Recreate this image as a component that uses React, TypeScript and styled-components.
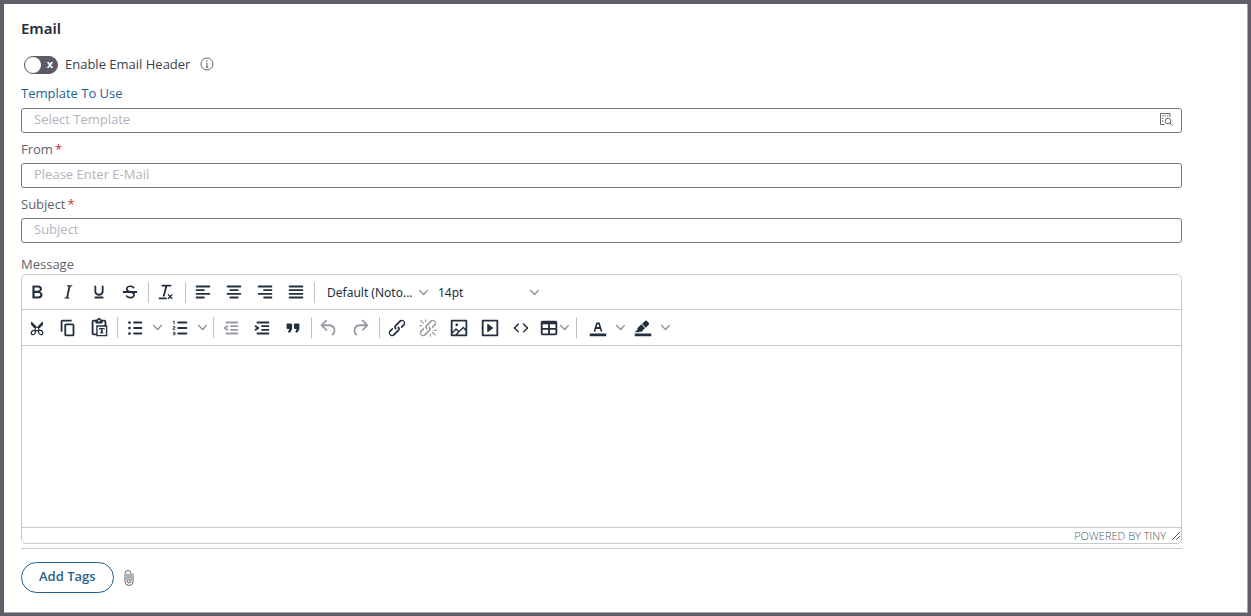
import React from "react";
import styled, { createGlobalStyle, css } from "styled-components";

const ink = "#222f3e";
const sans = `"Open Sans", "Noto Sans", sans-serif`;
const noto = `"Noto Sans", "Open Sans", sans-serif`;

const GlobalStyle = createGlobalStyle`
  *, *::before, *::after { box-sizing: border-box; }
  body { margin: 0; background: #625d68; font-family: ${sans}; font-size: 13px; color: #33373f; }
  button, input, select, textarea { font: inherit; color: inherit; }
`;

const Frame = styled.div`
  min-height: 100vh;
  display: flex;
  padding: 4px 3px 3px 4px;
`;

const Panel = styled.main`
  flex: 1;
  background: #fff;
  border: solid #a9a6ae;
  border-width: 0 1px 1px 0;
  padding: 15px 65px 19px 17px;
`;

const Title = styled.h1`
  margin: 0;
  font-family: ${noto};
  font-size: 15px;
  line-height: 18px;
  font-weight: 600;
  color: #262b36;
`;

const ToggleRow = styled.div`
  display: flex;
  align-items: center;
  height: 18px;
  margin-top: 19px;
  padding-left: 3px;
`;

const ToggleLabel = styled.label`
  display: flex;
  align-items: center;
  gap: 7px;
  line-height: 18px;
  color: #3c414b;
`;

const ToggleText = styled.span`
  padding-bottom: 2px;
`;

const Switch = styled.input`
  appearance: none;
  margin: 0;
  width: 34px;
  height: 18px;
  border: 1px solid #5f5a66;
  border-radius: 9px;
  background: #5f5a66;
  display: flex;
  align-items: center;
  justify-content: space-between;
  padding-right: 4px;
  &::before {
    content: "";
    width: 16px;
    height: 16px;
    border-radius: 50%;
    background: #fff;
  }
  &::after {
    content: "x";
    color: #fff;
    font: 700 11px/14px ${noto};
    padding-bottom: 2px;
  }
`;

const IconButton = styled.button`
  border: 0;
  background: none;
  padding: 0;
  display: flex;
  color: #62666d;
`;

const InfoButton = styled(IconButton)`
  margin-left: 10px;
  padding-bottom: 2px;
`;

const Label = styled.label<{ $link?: boolean }>`
  display: block;
  height: 30px;
  padding: 7px 0 0;
  line-height: 18px;
  color: #5e626b;
  ${(p) =>
    p.$link &&
    css`
      height: 34px;
      padding-top: 10px;
      font-weight: 500;
      color: #1f5f93;
    `}
`;

const MessageLabel = styled(Label)`
  height: 31px;
  padding-top: 12px;
`;

const Required = styled.span`
  margin-left: 2px;
  color: #c9302c;
`;

const Field = styled.div`
  display: flex;
  align-items: center;
  height: 25px;
  padding: 0 8px 3px 12px;
  border: 1px solid #77757d;
  border-radius: 3px;
`;

const TextInput = styled.input`
  flex: 1;
  min-width: 0;
  height: 20px;
  padding: 0;
  border: 0;
  outline: 0;
  background: none;
  &::placeholder { color: #b1b4bb; opacity: 1; }
`;

const Editor = styled.section`
  border: 1px solid #c8c9cb;
  border-radius: 5px;
  overflow: hidden;
`;

const Toolbar = styled.div`
  display: flex;
  align-items: center;
  height: 35px;
  border-bottom: 1px solid #c8c9cb;
  & + & { height: 36px; }
`;

const Group = styled.div<{ $tight?: boolean; $lead?: number }>`
  display: flex;
  align-items: center;
  height: 21px;
  padding: 0 ${(p) => (p.$tight ? 2 : 3)}px 0 ${(p) => p.$lead ?? 2}px;
  & + & { border-left: 1px solid #c0c2c6; }
  &:first-child { padding-left: 0; }
`;

const ToolButton = styled.button<{ $wide?: boolean }>`
  display: flex;
  align-items: center;
  width: ${(p) => (p.$wide ? 32 : 31)}px;
  height: 28px;
  padding: 0 4px;
  border: 0;
  background: none;
  color: ${ink};
  &:disabled { color: #999ca3; }
`;

const MenuToolButton = styled(ToolButton)`
  width: 36px;
  padding: 0 1px;
`;

const ArrowButton = styled(ToolButton)`
  width: 13px;
  padding: 0 1px;
`;

const SelectBox = styled.div`
  display: flex;
  align-items: center;
  width: 101px;
  & + & { margin-left: 10px; }
`;

const Select = styled.select`
  appearance: none;
  flex: 1;
  min-width: 0;
  padding: 2px 0 0;
  border: 0;
  background: none;
  font-family: ${noto};
  font-size: 12px;
  line-height: 18px;
  color: ${ink};
`;

const Body = styled.textarea`
  display: block;
  width: 100%;
  height: 181px;
  padding: 12px;
  border: 0;
  outline: 0;
  resize: none;
  font-size: 14px;
`;

const StatusBar = styled.footer`
  display: flex;
  align-items: center;
  justify-content: flex-end;
  gap: 5px;
  height: 16px;
  border-top: 1px solid #c8c9cb;
`;

const Powered = styled.a`
  font-size: 11px;
  line-height: 15px;
  font-weight: 300;
  color: #4f5661;
  text-decoration: none;
`;

const Actions = styled.div`
  display: flex;
  align-items: center;
  gap: 10px;
  margin-top: 4px;
  padding-top: 13px;
  border-top: 1px solid #c8c9cb;
`;

const PillButton = styled.button`
  height: 31px;
  padding: 0 17px 3px;
  border: 1px solid #1f5f93;
  border-radius: 16px;
  background: #fff;
  font-weight: 600;
  color: #2b5f8c;
`;

const paths: Record<string, string> = {
  bold: "M7.8 19c-.3 0-.5 0-.6-.2l-.2-.5V5.7c0-.2 0-.4.2-.5l.6-.2h5c1.5 0 2.7.3 3.5 1 .7.6 1.1 1.4 1.1 2.5a3 3 0 01-.6 1.9c-.4.6-1 1-1.6 1.2.4.1.9.3 1.3.6s.8.7 1 1.2c.4.4.5 1 .5 1.6 0 1.3-.4 2.3-1.3 3-.8.7-2.1 1-3.8 1H7.8zm5-8.3c.6 0 1.2-.1 1.6-.5.4-.3.6-.7.6-1.3 0-1.1-.8-1.7-2.3-1.7H9.3v3.5h3.4zm.5 6c.7 0 1.3-.1 1.7-.4.4-.4.6-.9.6-1.5s-.2-1-.7-1.4c-.4-.3-1-.4-2-.4H9.4v3.8h4z",
  italic: "M16.7 4.7l-.1.9h-.3c-.6 0-1 0-1.4.3-.3.3-.4.6-.5 1.1l-2.1 9.8v.6c0 .5.4.8 1.4.8h.2l-.2.8H8l.2-.8h.2c1.1 0 1.8-.5 2-1.5l2-9.8.1-.5c0-.6-.4-.8-1.4-.8h-.3l.2-.9h5.8z",
  underline: "M16 5c.6 0 1 .4 1 1v5.5a4 4 0 01-.4 1.8l-1 1.4a5.3 5.3 0 01-5.5 1 5 5 0 01-1.6-1c-.5-.4-.8-.9-1.1-1.4a4 4 0 01-.4-1.8V6c0-.6.4-1 1-1s1 .4 1 1v5.5c0 .3 0 .6.2 1l.6.7a3.3 3.3 0 002.2.8 3.4 3.4 0 002.2-.8c.3-.2.4-.5.6-.8l.2-.9V6c0-.6.4-1 1-1zM8 17h8c.6 0 1 .4 1 1s-.4 1-1 1H8a1 1 0 010-2z",
  strike: "M15.6 8.5c-.5-.7-1-1.1-1.3-1.3-.6-.4-1.3-.6-2-.6-2.7 0-2.8 1.7-2.8 2.1 0 1.6 1.8 2 3.2 2.3 4.4.9 4.6 2.8 4.6 3.9 0 1.4-.7 4.1-5 4.1A6.2 6.2 0 017 16.4l1.5-1.1c.4.6 1.6 2 3.7 2 1.6 0 2.5-.4 3-1.2.4-.8.3-2-.8-2.6-.7-.4-1.6-.7-2.9-1-1-.2-3.9-.8-3.9-3.6C7.6 6 10.3 5 12.4 5c2.9 0 4.2 1.6 4.7 2.4l-1.5 1.1zM5 11h14a1 1 0 010 2H5a1 1 0 010-2z",
  clear: "M13.2 6a1 1 0 010 .2l-2.6 10a1 1 0 01-1 .8h-.2a.8.8 0 01-.8-1l2.6-10H8a1 1 0 110-2h9a1 1 0 010 2h-3.8zM5 18h7a1 1 0 010 2H5a1 1 0 010-2zm13 1.5L16.5 18 15 19.5a.7.7 0 01-1-1l1.5-1.5-1.5-1.5a.7.7 0 011-1l1.5 1.5 1.5-1.5a.7.7 0 011 1L17.5 17l1.5 1.5a.7.7 0 01-1 1z",
  left: "M5 5h14a1 1 0 010 2H5a1 1 0 010-2zm0 4h8a1 1 0 010 2H5a1 1 0 010-2zm0 8h8a1 1 0 010 2H5a1 1 0 010-2zm0-4h14a1 1 0 010 2H5a1 1 0 010-2z",
  center: "M5 5h14a1 1 0 010 2H5a1 1 0 010-2zm3 4h8a1 1 0 010 2H8a1 1 0 010-2zm0 8h8a1 1 0 010 2H8a1 1 0 010-2zm-3-4h14a1 1 0 010 2H5a1 1 0 010-2z",
  right: "M5 5h14a1 1 0 010 2H5a1 1 0 010-2zm6 4h8a1 1 0 010 2h-8a1 1 0 010-2zm0 8h8a1 1 0 010 2h-8a1 1 0 010-2zm-6-4h14a1 1 0 010 2H5a1 1 0 010-2z",
  justify: "M5 5h14a1 1 0 010 2H5a1 1 0 010-2zm0 4h14a1 1 0 010 2H5a1 1 0 010-2zm0 4h14a1 1 0 010 2H5a1 1 0 010-2zm0 4h14a1 1 0 010 2H5a1 1 0 010-2z",
  cut: "M18 15c.6.7 1 1.4 1 2.3 0 .8-.2 1.5-.7 2l-.8.5-1 .2c-.4 0-.8 0-1.2-.3a3.9 3.9 0 01-2.1-2.2c-.2-.5-.3-1-.2-1.5l-1-1-1 1c0 .5 0 1-.2 1.5-.1.5-.4 1-.9 1.4-.3.4-.7.6-1.2.8l-1.2.3c-.4 0-.7 0-1-.2-.3 0-.6-.3-.8-.5-.5-.5-.8-1.2-.7-2 0-.9.4-1.6 1-2.2A3.7 3.7 0 018.6 14H9l1-1-4-4-.5-1a3.3 3.3 0 010-2c0-.4.3-.7.5-1l6 6 6-6 .5 1a3.3 3.3 0 010 2c0 .4-.3.7-.5 1l-4 4 1 1h.5c.4 0 .8 0 1.2.3.5.2.9.4 1.2.8zm-8.5 2.2l.1-.4v-.3-.4a1 1 0 00-.2-.5 1 1 0 00-.4-.2 1.6 1.6 0 00-.8 0 2.6 2.6 0 00-.8.3 2.5 2.5 0 00-.9 1.1l-.1.4v.7l.2.5.5.2h.7a2.5 2.5 0 00.8-.3 2.8 2.8 0 001-1zm2.5-2.8c.4 0 .7-.1 1-.4.3-.3.4-.6.4-1s-.1-.7-.4-1c-.3-.3-.6-.4-1-.4s-.7.1-1 .4c-.3.3-.4.6-.4 1s.1.7.4 1c.3.3.6.4 1 .4zm5.400 4l.2-.5v-.4-.3a2.600 2.600 0 00-.3-.8 2.400 2.400 0 00-.7-.7 2.500 2.500 0 00-.8-.3 1.500 1.500 0 00-.8 0 1 1 0 00-.4.2 1 1 0 00-.2.5 1.500 1.500 0 000 .7v.4l.3.4.3.4a2.800 2.800 0 00.8.5l.4.1h.7l.5-.2z",
  copy: "M16 3H6a2 2 0 00-2 2v11h2V5h10V3zm1 4a2 2 0 012 2v10a2 2 0 01-2 2h-7a2 2 0 01-2-2V9c0-1.2.9-2 2-2h7zm0 12V9h-7v10h7z",
  paste: "M18 9V5h-2v1c0 .6-.4 1-1 1H9a1 1 0 01-1-1V5H6v13h3V9h9zM9 20H6a2 2 0 01-2-2V5c0-1.1.9-2 2-2h3.2A3 3 0 0112 1a3 3 0 012.8 2H18a2 2 0 012 2v4h1v12H9v-1zm1.5-9.5v9h9v-9h-9zM12 3a1 1 0 00-1 1c0 .5.4 1 1 1s1-.5 1-1-.4-1-1-1zm0 9h6v2h-.5l-.5-1h-1v4h.8v1h-3.6v-1h.8v-4h-1l-.5 1H12v-2z",
  bullets: "M11 5h8a1 1 0 010 2h-8a1 1 0 010-2zm0 6h8a1 1 0 010 2h-8a1 1 0 010-2zm0 6h8a1 1 0 010 2h-8a1 1 0 010-2zM4.500 6a1.500 1.500 0 103 0 1.500 1.500 0 10-3 0zm0 6a1.500 1.500 0 103 0 1.500 1.500 0 10-3 0zm0 6a1.500 1.500 0 103 0 1.500 1.500 0 10-3 0z",
  numbers: "M10 17h9a1 1 0 010 2h-9a1 1 0 010-2zm0-6h9a1 1 0 010 2h-9a1 1 0 010-2zm0-6h9a1 1 0 010 2h-9a1 1 0 010-2zM6 4v3.500c0 .3-.2.5-.5.5a.5.5 0 01-.5-.5V5h-.5a.5.5 0 010-1H6zm-1 8.800l.2.2h1.300c.3 0 .5.2.5.5s-.2.5-.5.5H4.900a1 1 0 01-.9-1V13c0-.4.3-.8.6-1l1.200-.4.2-.3a.2.2 0 00-.2-.2H4.500a.5.5 0 01-.5-.5c0-.3.2-.5.5-.5h1.600c.5 0 .9.4.9 1v.1c0 .4-.3.8-.6 1l-1.200.4-.2.3zM7 17v2c0 .6-.4 1-1 1H4.500a.5.5 0 010-1h1.200c.2 0 .3-.1.3-.3 0-.2-.1-.3-.3-.3H4.400a.4.4 0 110-.8h1.300c.2 0 .3-.1.3-.3 0-.2-.1-.3-.3-.3H4.500a.5.5 0 110-1H6c.6 0 1 .4 1 1z",
  outdent: "M7 5h12a1 1 0 010 2H7a1 1 0 010-2zm5 4h7a1 1 0 010 2h-7a1 1 0 010-2zm0 4h7a1 1 0 010 2h-7a1 1 0 010-2zm-5 4h12a1 1 0 010 2H7a1 1 0 010-2zm1.600-3.800a1 1 0 01-1.200 1.600l-3-2a1 1 0 010-1.600l3-2a1 1 0 011.200 1.600L6.800 12l1.800 1.200z",
  indent: "M7 5h12a1 1 0 010 2H7a1 1 0 010-2zm5 4h7a1 1 0 010 2h-7a1 1 0 010-2zm0 4h7a1 1 0 010 2h-7a1 1 0 010-2zm-5 4h12a1 1 0 010 2H7a1 1 0 010-2zm-2.600-3.800L6.200 12l-1.800-1.200a1 1 0 011.200-1.600l3 2a1 1 0 010 1.600l-3 2a1 1 0 11-1.200-1.600z",
  quote: "M7.500 17h.9c.4 0 .7-.2.9-.6L11 13V8c0-.6-.4-1-1-1H6a1 1 0 00-1 1v4c0 .6.4 1 1 1h2l-1.300 2.700a1 1 0 00.8 1.300zm8 0h.9c.4 0 .7-.2.9-.6L19 13V8c0-.6-.4-1-1-1h-4a1 1 0 00-1 1v4c0 .6.4 1 1 1h2l-1.300 2.700a1 1 0 00.8 1.300z",
  undo: "M6.400 8H12c3.700 0 6.200 2 6.800 5.100.6 2.700-.4 5.600-2.300 6.800a1 1 0 01-1-1.800c1.100-.6 1.800-2.700 1.400-4.600-.5-2.100-2.100-3.500-4.900-3.500H6.400l3.300 3.300a1 1 0 11-1.400 1.400l-5-5a1 1 0 010-1.400l5-5a1 1 0 011.400 1.400L6.400 8z",
  redo: "M17.600 10H12c-2.800 0-4.400 1.400-4.900 3.500-.4 2 .3 4 1.400 4.600a1 1 0 11-1 1.800c-2-1.200-2.900-4.100-2.300-6.800.6-3 3-5.100 6.800-5.100h5.600l-3.300-3.300a1 1 0 111.400-1.400l5 5a1 1 0 010 1.400l-5 5a1 1 0 01-1.400-1.400l3.300-3.300z",
  link: "M6.200 12.300a1 1 0 011.400 1.400l-2.100 2a2 2 0 102.700 2.800l4.800-4.800a1 1 0 000-1.400 1 1 0 111.400-1.300 2.900 2.900 0 010 4L9.600 20a3.900 3.900 0 01-5.500-5.500l2-2zm11.600-.6a1 1 0 01-1.400-1.400l2-2a2 2 0 10-2.600-2.800L11 10.300a1 1 0 000 1.400A1 1 0 119.600 13a2.900 2.900 0 010-4L14.400 4a3.900 3.900 0 015.500 5.500l-2 2z",
  unlink: "M6.200 12.300a1 1 0 011.400 1.400l-2 2a2 2 0 102.600 2.800l4.800-4.800a1 1 0 000-1.400 1 1 0 111.400-1.300 2.900 2.900 0 010 4L9.600 20a3.900 3.900 0 01-5.500-5.500l2-2zm11.600-.6a1 1 0 01-1.400-1.400l2.100-2a2 2 0 10-2.700-2.800L11 10.300a1 1 0 000 1.400A1 1 0 119.600 13a2.900 2.900 0 010-4L14.400 4a3.900 3.900 0 015.500 5.500l-2 2zM7.600 6.300a.8.8 0 01-1 1.100L3.300 4.200a.7.7 0 111-1l3.200 3.100zM5.100 8.600a.8.8 0 010 1.500H3a.8.8 0 010-1.500H5zm5-3.500a.8.8 0 01-1.500 0V3a.8.8 0 011.500 0V5zm6 11.800a.8.8 0 011-1l3.200 3.200a.8.8 0 01-1 1L16 17zm-2.200 2a.8.8 0 011.500 0V21a.8.8 0 01-1.500 0V19zm5-3.500a.7.7 0 110-1.500H21a.8.8 0 010 1.500H19z",
  image: "M5 15.700l3.300-3.200c.3-.3.7-.3 1 0L12 15l4.100-4c.3-.4.8-.4 1 0l2 1.900V5H5v10.700zM5 18V19h3l2.800-2.900-2-2L5 17.900zm14-3l-2.500-2.400-6.400 6.500H19v-4zM4 3h16c.6 0 1 .4 1 1v16c0 .6-.4 1-1 1H4a1 1 0 01-1-1V4c0-.6.4-1 1-1zm4 5.500a1.500 1.500 0 103 0 1.500 1.500 0 10-3 0z",
  media: "M4 3h16c.6 0 1 .4 1 1v16c0 .6-.4 1-1 1H4a1 1 0 01-1-1V4c0-.6.4-1 1-1zm1 2v14h14V5H5zm4.800 2.600l5.600 4a.5.5 0 010 .8l-5.600 4A.5.5 0 019 16V8a.5.5 0 01.8-.4z",
  code: "M9.800 15.700c.3.3.3.8 0 1-.3.4-.9.4-1.200 0l-4.400-4.100a.8.8 0 010-1.200l4.400-4.200c.3-.3.9-.3 1.200 0 .3.3.3.8 0 1.100L6 12l3.800 3.700zM14.200 15.700c-.3.3-.3.8 0 1 .4.4.9.4 1.200 0l4.400-4.100c.3-.3.3-.9 0-1.200l-4.400-4.200a.8.8 0 00-1.200 0c-.3.3-.3.8 0 1.100L18 12l-3.800 3.700z",
  table: "M19 4a2 2 0 012 2v12a2 2 0 01-2 2H5a2 2 0 01-2-2V6c0-1.100.9-2 2-2h14zM5 14v4h6v-4H5zm14 0h-6v4h6v-4zm0-6h-6v4h6V8zM5 12h6V8H5v4z",
  color: "M3 18h18v3H3zM8.700 16h-.8a.5.5 0 01-.5-.6l2.700-9c.1-.3.3-.4.5-.4h2.800c.2 0 .4.1.5.4l2.700 9a.5.5 0 01-.5.6h-.8a.5.5 0 01-.4-.4l-.7-2.200c0-.3-.3-.4-.5-.4h-3.400c-.2 0-.4.1-.5.4l-.7 2.200c0 .3-.2.4-.4.4zm2.600-7.600l-.6 2a.5.5 0 00.5.6h1.600a.5.5 0 00.5-.6l-.6-2c0-.3-.3-.4-.5-.4h-.4c-.2 0-.4.1-.5.4z",
  highlight: "M3 18h18v3H3zM7.700 16.700H3l3.300-3.300-.7-.8L10.200 8l4 4.100-4 4.200c-.2.2-.6.2-.8 0l-.6-.7-1.100 1.100zm5-7.500L11 7.400l3-2.900a2 2 0 012.600 0L18 6c.7.7.7 2 0 2.700l-2.900 2.900-1.800-1.800-.5-.6z",
};

const Icon = ({ name }: { name: string }) => (
  <svg width="22" height="22" viewBox="0 0 24 24" fill="currentColor" aria-hidden="true">
    <path
      fillRule={["image", "media", "table"].includes(name) ? "evenodd" : "nonzero"}
      d={paths[name]}
    />
  </svg>
);

const Chevron = () => (
  <svg width="9" height="9" viewBox="0 0 10 10" fill="#8d9198" aria-hidden="true">
    <path d="M8.700 2.200c.3-.3.8-.3 1 0 .4.4.4.9 0 1.200L5.700 7.800c-.3.3-.9.3-1.200 0L.2 3.400a.8.8 0 010-1.200c.3-.3.8-.3 1.100 0L5 6l3.700-3.800z" />
  </svg>
);

type ToolProps = { name: string; label: string; disabled?: boolean };

const Tool = ({ name, label, disabled }: ToolProps) => (
  <ToolButton type="button" aria-label={label} disabled={disabled}>
    <Icon name={name} />
  </ToolButton>
);

const SplitTool = ({ name, label }: ToolProps) => (
  <>
    <ToolButton type="button" aria-label={label} $wide>
      <Icon name={name} />
    </ToolButton>
    <ArrowButton type="button" aria-label={`${label} options`}>
      <Chevron />
    </ArrowButton>
  </>
);

const ToolSelect = ({ label, value }: { label: string; value: string }) => (
  <SelectBox>
    <Select aria-label={label}>
      <option>{value}</option>
    </Select>
    <Chevron />
  </SelectBox>
);

export default function App() {
  return (
    <>
      <GlobalStyle />
      <Frame>
        <Panel>
          <Title>Email</Title>
          <ToggleRow>
            <ToggleLabel>
              <Switch type="checkbox" role="switch" />
              <ToggleText>Enable Email Header</ToggleText>
            </ToggleLabel>
            <InfoButton type="button" aria-label="About the email header">
              <svg width="14" height="14" viewBox="0 0 14 14" fill="none" stroke="currentColor">
                <circle cx="7" cy="7" r="6" />
                <path d="M6 6.300h1v4M5.700 10.200h2.600" />
                <path d="M6.300 3.900h1.200" strokeWidth="1.400" />
              </svg>
            </InfoButton>
          </ToggleRow>

          <Label $link htmlFor="template">Template To Use</Label>
          <Field>
            <TextInput id="template" placeholder="Select Template" />
            <IconButton type="button" aria-label="Browse templates">
              <svg width="14" height="14" viewBox="0 0 14 14" fill="none" stroke="currentColor">
                <path d="M5.500 12.500H1.500V1.500h9.500V5" />
                <path d="M3 3.800h1.500M5.500 3.800h1.500M8 3.800h1.500M3 6.500h1.500M3 9.200h1.500" />
                <circle cx="9" cy="9" r="2.800" />
                <path d="M11 11l2.500 2.500" />
              </svg>
            </IconButton>
          </Field>

          <Label htmlFor="from">From<Required>*</Required></Label>
          <Field>
            <TextInput id="from" type="email" required placeholder="Please Enter E-Mail" />
          </Field>

          <Label htmlFor="subject">Subject<Required>*</Required></Label>
          <Field>
            <TextInput id="subject" required placeholder="Subject" />
          </Field>

          <MessageLabel htmlFor="message">Message</MessageLabel>
          <Editor>
            <Toolbar role="toolbar" aria-label="Text formatting">
              <Group $tight>
                <Tool name="bold" label="Bold" />
                <Tool name="italic" label="Italic" />
                <Tool name="underline" label="Underline" />
                <Tool name="strike" label="Strikethrough" />
              </Group>
              <Group>
                <Tool name="clear" label="Clear formatting" />
              </Group>
              <Group $tight>
                <Tool name="left" label="Align left" />
                <Tool name="center" label="Align center" />
                <Tool name="right" label="Align right" />
                <Tool name="justify" label="Justify" />
              </Group>
              <Group $lead={12}>
                <ToolSelect label="Font family" value="Default (Noto..." />
                <ToolSelect label="Font size" value="14pt" />
              </Group>
            </Toolbar>
            <Toolbar role="toolbar" aria-label="Editing and insertion">
              <Group $tight>
                <Tool name="cut" label="Cut" />
                <Tool name="copy" label="Copy" />
                <Tool name="paste" label="Paste as text" />
              </Group>
              <Group>
                <SplitTool name="bullets" label="Bullet list" />
                <SplitTool name="numbers" label="Numbered list" />
              </Group>
              <Group $tight>
                <Tool name="outdent" label="Decrease indent" disabled />
                <Tool name="indent" label="Increase indent" />
                <Tool name="quote" label="Blockquote" />
              </Group>
              <Group>
                <Tool name="undo" label="Undo" disabled />
                <Tool name="redo" label="Redo" disabled />
              </Group>
              <Group>
                <Tool name="link" label="Insert link" />
                <Tool name="unlink" label="Remove link" disabled />
                <Tool name="image" label="Insert image" />
                <Tool name="media" label="Insert media" />
                <Tool name="code" label="Source code" />
                <MenuToolButton type="button" aria-label="Table">
                  <Icon name="table" />
                  <Chevron />
                </MenuToolButton>
              </Group>
              <Group $lead={6}>
                <SplitTool name="color" label="Text color" />
                <SplitTool name="highlight" label="Highlight color" />
              </Group>
            </Toolbar>
            <Body id="message" />
            <StatusBar>
              <Powered href="#">POWERED BY TINY</Powered>
              <svg width="10" height="10" viewBox="0 0 10 10" stroke="#4c5460" strokeLinecap="round" aria-hidden="true">
                <path d="M1.500 8.500l7-7M5.500 8.500l3-3" />
              </svg>
            </StatusBar>
          </Editor>

          <Actions>
            <PillButton type="button">Add Tags</PillButton>
            <IconButton type="button" aria-label="Attach file">
              <svg width="10" height="18" viewBox="0 0 10 18" fill="none" stroke="currentColor" strokeLinecap="round">
                <path d="M3 5v7a2 2 0 004 0V4.500a3 3 0 00-6 0V12.500a4 4 0 008 0V5" />
                <path d="M5 5v7" />
              </svg>
            </IconButton>
          </Actions>
        </Panel>
      </Frame>
    </>
  );
}
